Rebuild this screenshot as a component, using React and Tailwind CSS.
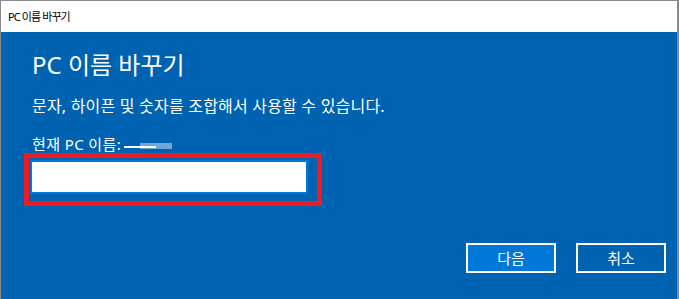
export default function App() {
  return (
    <div className="w-[679px] h-[299px] flex flex-col border-l border-t border-r-2 border-[#8a8a8a] font-['Noto_Sans','Noto_Sans_CJK_KR',sans-serif] overflow-hidden">
      {/* title bar */}
      <div className="h-[31px] shrink-0 bg-white pl-[7px] text-[11px] tracking-[-0.9px] leading-[31px] text-black">
        PC 이름 바꾸기
      </div>

      {/* body */}
      <div className="flex-1 flex flex-col bg-[#0063b1] pl-[31px] text-white">
        <h1 className="mt-[18px] text-[24px] leading-[30px] font-normal">PC 이름 바꾸기</h1>
        <p className="mt-[16px] text-[16px] tracking-[0.2px] leading-[20px]">
          문자, 하이픈 및 숫자를 조합해서 사용할 수 있습니다.
        </p>
        <div className="mt-[19px] flex items-center text-[15px] tracking-[0.4px] leading-[18px]">
          <span>현재 PC 이름:</span>
          <span className="relative ml-[3px] inline-block w-[48px] h-[18px]">
            <span className="absolute left-[16px] top-[8px] w-[32px] h-[6px] bg-[#6fa8d8]" />
            <span className="absolute left-0 top-[11px] w-[32px] h-[2px] bg-white" />
          </span>
        </div>

        {/* highlighted input */}
        <div className="ml-[-8px] w-[298px] h-[53px] border-[5px] border-[#ed1c24] pl-px pt-[2px]">
          <div className="w-[278px] h-[34px] border-2 border-[#0078d7] bg-white" />
        </div>

        <div className="mt-auto mb-[26px] mr-[11px] flex justify-end gap-[20px]">
          <button className="w-[90px] h-[30px] border-2 border-white bg-[#0078d7] text-[15px] text-white">
            다음
          </button>
          <button className="w-[90px] h-[30px] border-2 border-white bg-[#0063b1] text-[15px] text-white">
            취소
          </button>
        </div>
      </div>
    </div>
  );
}
